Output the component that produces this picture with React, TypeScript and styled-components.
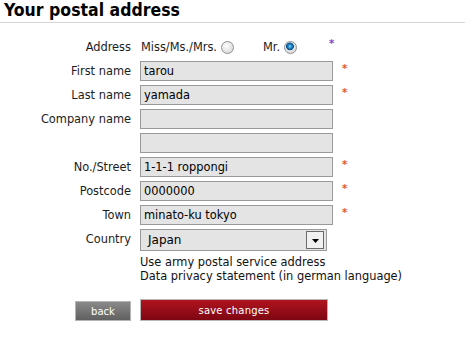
import styled, { createGlobalStyle } from "styled-components";

const GlobalStyle = createGlobalStyle`
  body {
    margin: 0;
    background: #ffffff;
    font-family: "DejaVu Sans", Verdana, sans-serif;
    font-size: 11.4px;
    color: #1c1c24;
  }
`;

interface Field {
  label: string;
  value: string;
  required?: boolean;
}

const fields: Field[] = [
  { label: "First name", value: "tarou", required: true },
  { label: "Last name", value: "yamada", required: true },
  { label: "Company name", value: "" },
  { label: "", value: "" },
  { label: "No./Street", value: "1-1-1 roppongi", required: true },
  { label: "Postcode", value: "0000000", required: true },
  { label: "Town", value: "minato-ku tokyo", required: true },
];

export default function App() {
  return (
    <>
      <GlobalStyle />
      <Page>
        <Heading>Your postal address</Heading>
        <Form>
          <Label>Address</Label>
          <Salutation>
            <Option>
              Miss/Ms./Mrs. <Radio />
            </Option>
            <Option>
              Mr. <Radio $checked />
            </Option>
            <Star $purple>*</Star>
          </Salutation>

          {fields.map((f, i) => (
            <Row key={i}>
              <Label>{f.label}</Label>
              <Input>{f.value}</Input>
              <span>{f.required && <Star>*</Star>}</span>
            </Row>
          ))}

          <Label>Country</Label>
          <Select>
            <span>Japan</span>
            <DropButton>
              <svg width="7" height="4" viewBox="0 0 7 4">
                <polygon points="0,0 7,0 3.5,4" fill="#000" />
              </svg>
            </DropButton>
          </Select>
          <span />

          <Notes>
            <div>Use army postal service address</div>
            <div>Data privacy statement (in german language)</div>
          </Notes>

          <BackButton>back</BackButton>
          <SaveButton>save changes</SaveButton>
        </Form>
      </Page>
    </>
  );
}

const Page = styled.div`
  width: 465px;
`;

const Heading = styled.h1`
  margin: 0;
  padding: 0 4px;
  height: 22px;
  line-height: 20px;
  font-family: "DejaVu Sans Condensed", "DejaVu Sans", sans-serif;
  font-size: 17.5px;
  font-weight: bold;
  color: #000;
  border-bottom: 1px solid #d6d6d6;
`;

const Form = styled.div`
  display: grid;
  grid-template-columns: 127px 193px 1fr;
  column-gap: 9px;
  row-gap: 4px;
  padding: 14px 0 0 4px;
`;

const Row = styled.div`
  display: contents;
`;

const Label = styled.div`
  height: 20px;
  line-height: 20px;
  text-align: right;
  white-space: nowrap;
`;

const Salutation = styled.div`
  grid-column: 2 / span 2;
  display: flex;
  align-items: center;
  height: 20px;
`;

const Option = styled.label`
  display: flex;
  align-items: center;
  gap: 4px;
  margin-right: 28px;
  padding-left: 1px;

  &:last-of-type {
    margin-right: 32px;
  }
`;

const Radio = styled.span<{ $checked?: boolean }>`
  display: inline-block;
  width: 11px;
  height: 11px;
  border-radius: 50%;
  border: 1px solid #8f9090;
  background: ${(p) =>
    p.$checked
      ? "radial-gradient(circle at 45% 40%, #7fd6ff 0, #1e86c8 2px, #0a4a82 3.6px, transparent 4.2px), radial-gradient(circle at 40% 35%, #ffffff, #cfcfcf)"
      : "radial-gradient(circle at 40% 35%, #ffffff, #cfcfcf)"};
`;

const Star = styled.span<{ $purple?: boolean }>`
  display: inline-block;
  font-size: 10px;
  font-weight: bold;
  line-height: 10px;
  margin-top: ${(p) => (p.$purple ? "-6px" : "2px")};
  color: ${(p) => (p.$purple ? "#8a3fc8" : "#e4562a")};
`;

const Input = styled.div`
  box-sizing: border-box;
  height: 20px;
  padding: 0 3px;
  line-height: 18px;
  background: #e4e4e4;
  border: 1px solid #9a9a9a;
  color: #000;
`;

const Select = styled.div`
  box-sizing: border-box;
  width: 187px;
  height: 22px;
  display: flex;
  align-items: center;
  justify-content: space-between;
  padding: 0 2px 0 7px;
  background: #e4e4e4;
  border: 1px solid #9a9a9a;
  color: #000;
  font-size: 12px;
`;

const DropButton = styled.span`
  box-sizing: border-box;
  width: 18px;
  height: 18px;
  display: flex;
  align-items: center;
  justify-content: center;
  background: #f1f1f1;
  border: 1px solid #6a6a6a;
  padding-top: 2px;
`;

const Notes = styled.div`
  grid-column: 2 / span 2;
  line-height: 14px;
  color: #111;
`;

const BackButton = styled.button`
  justify-self: end;
  align-self: end;
  margin-top: 12px;
  width: 56px;
  height: 20px;
  padding: 0;
  border: 1px solid #b4b4b4;
  background: linear-gradient(#8a8a8a, #606060);
  color: #fff;
  font-family: "DejaVu Sans", Verdana, sans-serif;
  font-size: 10px;
`;

const SaveButton = styled.button`
  margin-top: 12px;
  width: 188px;
  height: 22px;
  padding: 0;
  border: 1px solid #b8b8b8;
  background: linear-gradient(#b0141f, #7e0612);
  color: #fff;
  font-family: "DejaVu Sans", Verdana, sans-serif;
  font-size: 10px;
  letter-spacing: 0.2px;
`;
